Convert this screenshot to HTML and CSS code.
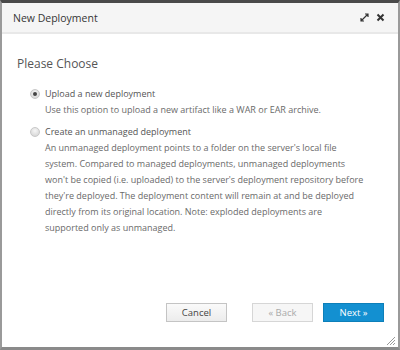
FILE: index.html
```html
<!DOCTYPE html>
<html lang="en">
  <head>
    <meta charset="UTF-8" />
    <title>New Deployment</title>
    <link rel="stylesheet" href="styles.css">
  </head>
  <body>
    <div class="dialog">
      <div class="dialog-header">
        <span class="dialog-title">New Deployment</span>
        <span class="dialog-tools">
          <svg class="tool-icon" width="9" height="9" viewBox="0 0 9 9">
            <path d="M1.5 7.5 L7.5 1.5 M5 1 H8 V4 M1 5 V8 H4" stroke="#333" stroke-width="1.2" fill="none" />
          </svg>
          <svg class="tool-icon" width="9" height="9" viewBox="0 0 9 9">
            <path d="M1.5 1.5 L7.5 7.5 M7.5 1.5 L1.5 7.5" stroke="#333" stroke-width="2" fill="none" />
          </svg>
        </span>
      </div>
      <div class="dialog-body">
        <h2 class="choose-title">Please Choose</h2>
        <label class="option">
          <span class="radio checked"></span>
          <span class="option-text">
            <span class="option-label">Upload a new deployment</span>
            <span class="option-desc">Use this option to upload a new artifact like a WAR or EAR archive.</span>
          </span>
        </label>
        <label class="option">
          <span class="radio"></span>
          <span class="option-text">
            <span class="option-label">Create an unmanaged deployment</span>
            <span class="option-desc">An unmanaged deployment points to a folder on the server's local file system. Compared to managed deployments, unmanaged deployments won't be copied (i.e. uploaded) to the server's deployment repository before they're deployed. The deployment content will remain at and be deployed directly from its original location. Note: exploded deployments are supported only as unmanaged.</span>
          </span>
        </label>
      </div>
      <div class="dialog-footer">
        <button class="btn">Cancel</button>
        <button class="btn disabled">&laquo; Back</button>
        <button class="btn primary">Next &raquo;</button>
      </div>
      <svg class="resize" width="10" height="10" viewBox="0 0 10 10">
        <path d="M9 1 L1 9 M9 4 L4 9 M9 7 L7 9" stroke="#999" stroke-width="1" />
      </svg>
    </div>
  </body>
</html>
```

FILE: styles.css
```css
html, body {
  margin: 0;
  height: 100%;
}
body {
  font-family: "Open Sans", "Liberation Sans", sans-serif;
  background: #fff;
  color: #666;
}
.dialog {
  position: relative;
  box-sizing: border-box;
  height: 350px;
  display: flex;
  flex-direction: column;
  border-top: 3px solid #4a4a4a;
  border-left: 2px solid #9a9a9a;
  border-right: 2px solid #9a9a9a;
  border-bottom: 3px solid #8a8a8a;
  background: #fff;
}
.dialog-header {
  height: 29px;
  background: #f5f5f5;
  border-bottom: 2px solid #e8e8e8;
  display: flex;
  align-items: center;
  justify-content: space-between;
  padding: 0 13px 0 11px;
}
.dialog-title {
  font-size: 10.5px;
  color: #363636;
}
.dialog-tools {
  display: flex;
  gap: 7px;
  align-items: center;
}
.dialog-body {
  flex: 1;
  padding: 0 15px;
}
.choose-title {
  font-size: 12px;
  line-height: 16px;
  font-weight: normal;
  color: #555;
  margin: 22px 0 14px;
}
.option {
  display: flex;
  gap: 5px;
  padding-left: 13px;
  margin-bottom: 6px;
}
.radio {
  flex: none;
  box-sizing: border-box;
  width: 10px;
  height: 10px;
  margin-top: 3px;
  border-radius: 50%;
  background: radial-gradient(circle at 50% 35%, #f6f6f6, #d0d0d0);
  border: 1px solid #c8c8c8;
  position: relative;
}
.radio.checked::after {
  content: "";
  position: absolute;
  left: 2px;
  top: 2px;
  width: 4px;
  height: 4px;
  border-radius: 50%;
  background: #444;
}
.option-text {
  display: flex;
  flex-direction: column;
  width: 322px;
}
.option-label {
  font-size: 9px;
  line-height: 16px;
  color: #555;
}
.option-desc {
  font-size: 9px;
  line-height: 16px;
  color: #6a6a6a;
}
.dialog-footer {
  display: flex;
  justify-content: flex-end;
  padding: 0 14px 25px 0;
}
.btn {
  width: 61px;
  height: 19px;
  font-family: inherit;
  font-size: 9.5px;
  color: #444;
  background: linear-gradient(#fafafa, #ececec);
  border: 1px solid #c4c4c4;
  margin-left: 10px;
  padding: 0;
}
.btn:first-child {
  margin-right: 15px;
}
.btn.disabled {
  color: #aaa;
  background: #f6f6f6;
  border-color: #d6d6d6;
}
.btn.primary {
  color: #fff;
  background: #1390d1;
  border-color: #0d7fb9;
}
.resize {
  position: absolute;
  right: 2px;
  bottom: 1px;
}
```
